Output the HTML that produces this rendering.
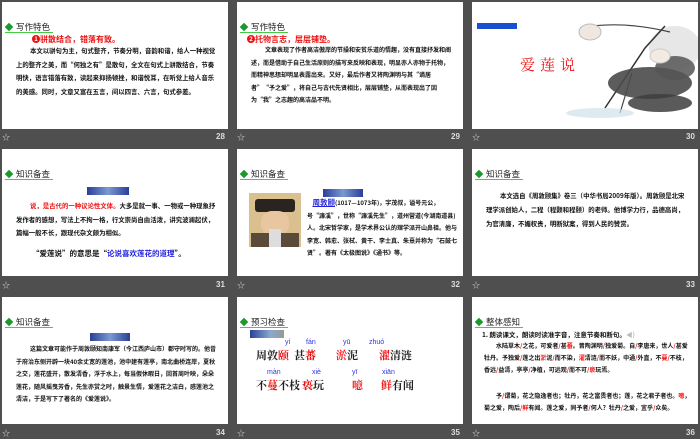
<!DOCTYPE html>
<html><head><meta charset="utf-8"><style>
*{margin:0;padding:0;box-sizing:border-box}
body{width:700px;height:438px;background:#4f4f4f;position:relative;overflow:hidden;font-family:"Liberation Sans","Noto Sans CJK SC",sans-serif}
.s{position:absolute;width:226px;height:127px;background:#fff;overflow:hidden}
.lbl{position:absolute;color:#ccc;font-size:8px;font-family:"Noto Sans CJK SC",sans-serif}
.num{position:absolute;color:#ddd;font-size:8px;font-weight:bold;font-family:"Liberation Sans",sans-serif}
.h{position:absolute;left:3px;top:20px;font-size:8.5px;color:#222;font-family:"Noto Sans CJK SC",sans-serif;border-bottom:1px solid #4c4;padding-left:11px;line-height:10px;width:48px}
.h:before{content:"";position:absolute;left:1px;top:2px;width:6px;height:6px;background:#1a9a2a;transform:rotate(45deg)}
.t{position:absolute;font-size:6.4px;line-height:13.5px;color:#111;font-weight:bold;font-family:"Noto Sans CJK SC",sans-serif}
.r{color:#e11}.b{color:#22d}
.tag{position:absolute;height:8px;background:linear-gradient(90deg,#2a3f9a,#7a9ad0,#2a3f9a);}
.big{font-family:"Noto Serif CJK SC",serif;font-weight:bold;font-size:11px;color:#222}
</style></head><body>

<!-- 28 -->
<div class="s" style="left:2px;top:2px">
<div class="h">写作特色</div>
<div style="position:absolute;left:30px;top:32px;font-size:8px;color:#e11;font-weight:bold;font-family:'Noto Sans CJK SC',sans-serif"><span style="display:inline-block;width:8px;height:8px;border-radius:50%;background:#e11;color:#fff;font-size:6px;text-align:center;line-height:8px;vertical-align:1px">1</span>骈散结合，错落有致。</div>
<div class="t" style="left:14px;top:42px;width:200px;text-indent:14px">本文以骈句为主，句式整齐，节奏分明，音韵和谐，给人一种视觉上的整齐之美，而“何独之有”是散句，全文在句式上骈散结合，节奏明快，语言错落有致，读起来抑扬顿挫，和谐悦耳，在听觉上给人音乐的美感。同时，文章又富在五言，间以四言、六言，句式参差。</div>
</div>
<div class="lbl" style="left:2px;top:132px">☆</div><div class="num" style="left:216px;top:132px">28</div>

<!-- 29 -->
<div class="s" style="left:237px;top:2px">
<div class="h">写作特色</div>
<div style="position:absolute;left:10px;top:32px;font-size:8px;color:#e11;font-weight:bold;font-family:'Noto Sans CJK SC',sans-serif"><span style="display:inline-block;width:8px;height:8px;border-radius:50%;background:#e11;color:#fff;font-size:6px;text-align:center;line-height:8px;vertical-align:1px">2</span>托物言志，层层铺垫。</div>
<div class="t" style="left:14px;top:42px;width:200px;text-indent:14px;font-size:6px;line-height:12.5px">文章表现了作者高洁傲岸的节操和安贫乐道的情趣，没有直接抒发和阐述，而是借助于自己生活原则的描写来反映和表现，明显亦人亦物于托物，而精神思想却明显表露出来。又好，最后作者又将陶渊明与其“谪居者”“予之爱”，将自己与古代先贤相比，层层铺垫，从而表现出了因为“我”之志趣的高洁品不明。</div>
</div>
<div class="lbl" style="left:237px;top:132px">☆</div><div class="num" style="left:451px;top:132px">29</div>

<!-- 30 -->
<div class="s" style="left:472px;top:2px">
<div class="tag" style="left:5px;top:21px;width:40px;height:6px;background:#1a4fd0"></div>
<div style="position:absolute;left:48px;top:52px;font-size:15px;color:#e11;letter-spacing:5px;font-family:'Noto Serif CJK SC',serif">爱莲说</div>
<svg style="position:absolute;left:88px;top:16px" width="138" height="100" viewBox="0 0 138 100">
<ellipse cx="115" cy="30" rx="26" ry="22" fill="#ddd" opacity=".7"/>
<path d="M45 90 L85 30 L105 8" stroke="#333" stroke-width="1.5" fill="none"/>
<path d="M60 95 L72 55" stroke="#444" stroke-width="1.2" fill="none"/>
<path d="M20 10 Q60 2 110 14" stroke="#444" stroke-width="1.2" fill="none"/>
<ellipse cx="90" cy="65" rx="42" ry="16" fill="#4a4a4a" opacity=".9"/>
<ellipse cx="100" cy="85" rx="32" ry="9" fill="#3d3d3d" opacity=".85"/>
<ellipse cx="115" cy="50" rx="20" ry="12" fill="#555" opacity=".85"/>
<ellipse cx="30" cy="14" rx="11" ry="8" fill="#f0e8e0" stroke="#bbb"/>
<ellipse cx="100" cy="38" rx="10" ry="7" fill="#f3ebe2" stroke="#ccc"/>
<ellipse cx="40" cy="95" rx="34" ry="5" fill="#cfe2e8" opacity=".7"/>
</svg>
</div>
<div class="lbl" style="left:472px;top:132px">☆</div><div class="num" style="left:686px;top:132px">30</div>

<!-- 31 -->
<div class="s" style="left:2px;top:149px">
<div class="h">知识备查</div>
<div class="tag" style="left:85px;top:38px;width:42px"></div>
<div class="t" style="left:14px;top:50px;width:200px;text-indent:14px"><span class="r">说，是古代的一种议论性文体。</span>大多是就一事、一物或一种现象抒发作者的感想，写法上不拘一格，行文崇尚自由活泼，讲究波澜起伏，篇幅一般不长，跟现代杂文颇为相似。</div>
<div class="t" style="left:30px;top:98px;font-size:7.5px">“爱莲说”的意思是“<span class="b">论说喜欢莲花的道理</span>”。</div>
</div>
<div class="lbl" style="left:2px;top:280px">☆</div><div class="num" style="left:216px;top:280px">31</div>

<!-- 32 -->
<div class="s" style="left:237px;top:149px">
<div class="h">知识备查</div>
<div class="tag" style="left:86px;top:40px;width:40px"></div>
<div style="position:absolute;left:12px;top:44px;width:52px;height:54px;background:#d9c08e">
<div style="position:absolute;left:6px;top:6px;width:40px;height:13px;background:#2a2420;border-radius:3px"></div>
<div style="position:absolute;left:12px;top:18px;width:28px;height:24px;background:#e8c6a0;border-radius:40%"></div>
<div style="position:absolute;left:2px;top:40px;width:48px;height:14px;background:#5a4a3a"></div>
<div style="position:absolute;left:20px;top:36px;width:12px;height:18px;background:#ddd"></div>
</div>
<div class="t" style="left:70px;top:48px;width:150px;font-size:6px;line-height:12.5px">&nbsp;&nbsp;&nbsp;&nbsp;<span class="b" style="text-decoration:underline;font-size:7.5px">周敦颐</span>(1017—1073年)，字茂叔，谥号元公，号“濂溪”，世称“濂溪先生”，道州营道(今湖南道县)人。北宋哲学家，是学术界公认的理学派开山鼻祖。他与李宽、韩愈、张栻、黄干、李士真、朱熹并称为“石鼓七贤”。著有《太极图说》《通书》等。</div>
</div>
<div class="lbl" style="left:237px;top:280px">☆</div><div class="num" style="left:451px;top:280px">32</div>

<!-- 33 -->
<div class="s" style="left:472px;top:149px">
<div class="h">知识备查</div>
<div class="t" style="left:14px;top:40px;width:200px;text-indent:14px;line-height:14px">本文选自《周敦颐集》卷三（中华书局2009年版）。周敦颐是北宋理学派创始人，二程（程颢和程颐）的老师。他博学力行，品德高尚，为官清廉，不媚权贵，明断狱案，得到人民的赞赏。</div>
</div>
<div class="lbl" style="left:472px;top:280px">☆</div><div class="num" style="left:686px;top:280px">33</div>

<!-- 34 -->
<div class="s" style="left:2px;top:297px">
<div class="h">知识备查</div>
<div class="tag" style="left:88px;top:36px;width:40px"></div>
<div class="t" style="left:14px;top:46px;width:200px;text-indent:14px;font-size:6px;line-height:12.5px">这篇文章可能作于周敦颐知南康军（今江西庐山市）郡守时写的。他曾于府治东侧开辟一块40余丈宽的莲池，池中建有莲亭，南北曲桥连岸，夏秋之交，莲花盛开，散发清香，浮于水上，每当假休暇日，回首周叶映，朵朵莲花，随风摇曳芳香，先生亦赏之时，触景生情，爱莲花之洁白，感莲池之清洁，于是写下了著名的《爱莲说》。</div>
</div>
<div class="lbl" style="left:2px;top:428px">☆</div><div class="num" style="left:216px;top:428px">34</div>

<!-- 35 -->
<div class="s" style="left:237px;top:297px">
<div class="h">预习检查</div>
<div class="tag" style="left:13px;top:33px;width:34px;background:linear-gradient(90deg,#2a3f9a,#8ac 60%,#999)"></div>
<div class="big">
<span style="position:absolute;left:19px;top:50px">周敦<span class="r">颐</span></span>
<span style="position:absolute;left:57px;top:50px">甚<span class="r">蕃</span></span>
<span style="position:absolute;left:99px;top:50px"><span class="r">淤</span>泥</span>
<span style="position:absolute;left:142px;top:50px"><span class="r">濯</span>清涟</span>
<span style="position:absolute;left:19px;top:80px">不<span class="r">蔓</span>不枝</span>
<span style="position:absolute;left:65px;top:80px"><span class="r">亵</span>玩</span>
<span style="position:absolute;left:115px;top:80px"><span class="r">噫</span></span>
<span style="position:absolute;left:144px;top:80px"><span class="r">鲜</span>有闻</span>
</div>
<div style="font-family:'Liberation Sans',sans-serif;font-size:7px;color:#33d">
<span style="position:absolute;left:48px;top:42px">yí</span>
<span style="position:absolute;left:69px;top:42px">fán</span>
<span style="position:absolute;left:106px;top:42px">yū</span>
<span style="position:absolute;left:132px;top:42px">zhuó</span>
<span style="position:absolute;left:30px;top:72px">màn</span>
<span style="position:absolute;left:75px;top:72px">xiè</span>
<span style="position:absolute;left:115px;top:72px">yī</span>
<span style="position:absolute;left:145px;top:72px">xiān</span>
</div>
</div>
<div class="lbl" style="left:237px;top:428px">☆</div><div class="num" style="left:451px;top:428px">35</div>

<!-- 36 -->
<div class="s" style="left:472px;top:297px">
<div class="h">整体感知</div>
<div class="t" style="left:10px;top:31px;font-size:6.5px">1. 朗读课文，朗读时读准字音，注意节奏和断句。<span style="color:#bbb">◀)</span></div>
<div class="t" style="left:12px;top:43px;width:208px;text-indent:12px;font-size:6px;line-height:12px">水陆草木<span class="r">/</span>之花，可爱者<span class="r">/</span>甚<span class="r">蕃</span>。晋陶渊明<span class="r">/</span>独爱菊。自<span class="r">/</span>李唐来，世人<span class="r">/</span>甚爱牡丹。予独爱<span class="r">/</span>莲之出<span class="r">淤</span>泥<span class="r">/</span>而不染，<span class="r">濯</span>清涟<span class="r">/</span>而不妖，中通<span class="r">/</span>外直，不<span class="r">蔓</span><span class="r">/</span>不枝，香远<span class="r">/</span>益清，亭亭<span class="r">/</span>净植，可远观<span class="r">/</span>而不可<span class="r">/</span><span class="r">亵</span>玩焉。</div>
<div class="t" style="left:12px;top:93px;width:208px;text-indent:12px;font-size:6px;line-height:12px">予<span class="r">/</span>谓菊，花之隐逸者也；牡丹，花之富贵者也；莲，花之君子者也。<span class="r">噫</span>，菊之爱，陶后<span class="r">/</span><span class="r">鲜</span>有闻。莲之爱，同予者<span class="r">/</span>何人？牡丹<span class="r">/</span>之爱，宜乎<span class="r">/</span>众矣。</div>
</div>
<div class="lbl" style="left:472px;top:428px">☆</div><div class="num" style="left:686px;top:428px">36</div>

</body></html>
